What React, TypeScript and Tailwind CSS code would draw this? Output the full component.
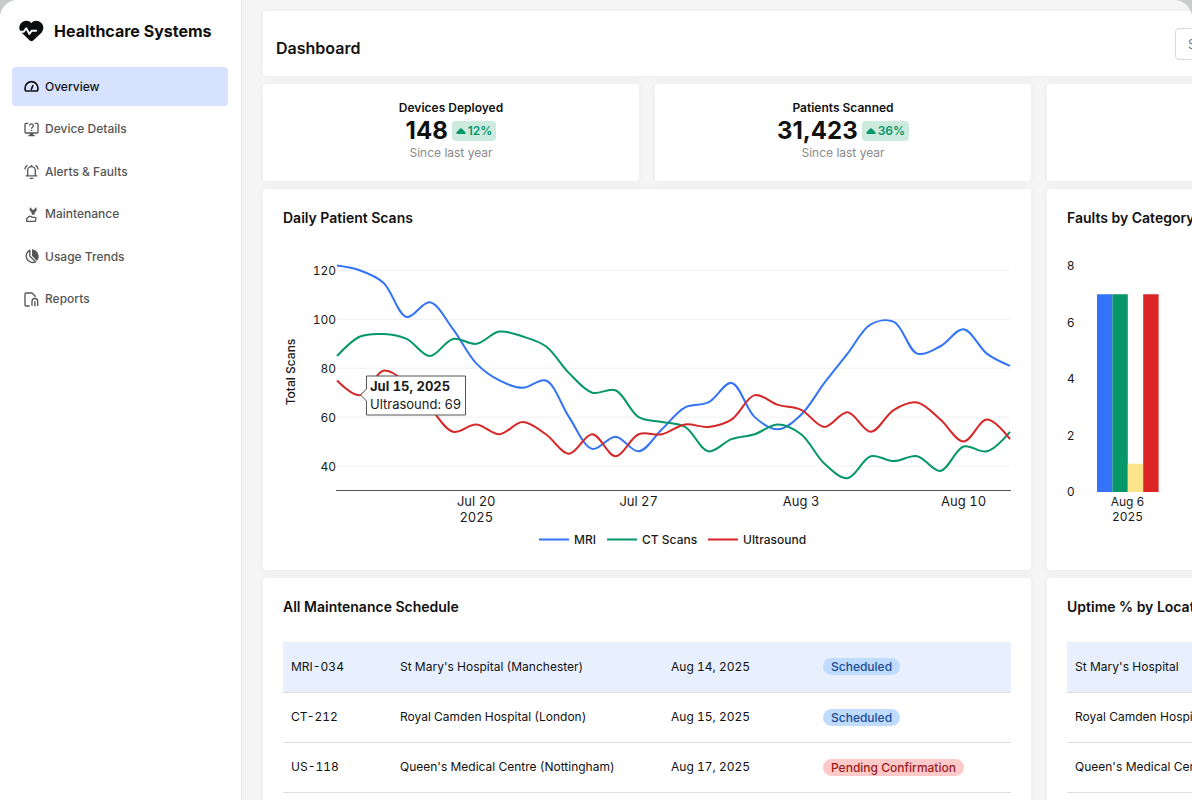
import type { ReactNode } from "react";

type Point = [number, number];

const navItems = [
  { label: "Overview", icon: <GaugeIcon />, active: true },
  { label: "Device Details", icon: <DeviceIcon /> },
  { label: "Alerts & Faults", icon: <BellIcon /> },
  { label: "Maintenance", icon: <WrenchHandIcon /> },
  { label: "Usage Trends", icon: <PieIcon /> },
  { label: "Reports", icon: <ReportIcon /> },
];

const stats = [
  { label: "Devices Deployed", value: "148", change: "12%" },
  { label: "Patients Scanned", value: "31,423", change: "36%" },
];

// One value per day, Jul 14 to Aug 12
const series = [
  {
    name: "MRI",
    color: "#3373f6",
    labelX: 292,
    values: [122, 120, 115, 101, 107, 96, 82, 75, 72, 75, 60, 47, 52, 46, 55, 64, 66, 74, 60, 55, 61, 74, 86, 98, 99, 86, 89, 96, 86, 81],
  },
  {
    name: "CT Scans",
    color: "#059669",
    labelX: 360,
    values: [85, 93, 94, 92, 85, 92, 90, 95, 93, 89, 78, 70, 71, 60, 58, 56, 46, 51, 53, 57, 53, 41, 35, 44, 42, 44, 38, 48, 46, 54],
  },
  {
    name: "Ultrasound",
    color: "#d62728",
    labelX: 461,
    values: [75, 69, 79, 74, 64, 54, 57, 53, 58, 53, 45, 53, 44, 53, 53, 57, 56, 59, 69, 65, 63, 56, 62, 54, 63, 66, 59, 50, 59, 51],
  },
];

const faults = [
  { value: 7, color: "#3373f9" },
  { value: 7, color: "#05966a" },
  { value: 1, color: "#fde38a" },
  { value: 7, color: "#dc2626" },
];

const schedule = [
  { id: "MRI-034", site: "St Mary's Hospital (Manchester)", date: "Aug 14, 2025", status: "Scheduled" },
  { id: "CT-212", site: "Royal Camden Hospital (London)", date: "Aug 15, 2025", status: "Scheduled" },
  { id: "US-118", site: "Queen's Medical Centre (Nottingham)", date: "Aug 17, 2025", status: "Pending Confirmation" },
];

const uptimeSites = ["St Mary's Hospital", "Royal Camden Hospital", "Queen's Medical Centre"];

const dayX = (day: number) => 55 + (day * 673) / 29;
const scanY = (value: number) => 39.5 + ((120 - value) * 195.5) / 80;

// Centripetal Catmull-Rom control points on both sides of a point
function tangent(prev: Point, cur: Point, next: Point): [Point, Point] {
  const d1 = [prev[0] - cur[0], prev[1] - cur[1]];
  const d2 = [next[0] - cur[0], next[1] - cur[1]];
  const a = Math.sqrt(Math.hypot(d1[0], d1[1]));
  const b = Math.sqrt(Math.hypot(d2[0], d2[1]));
  const nx = b * b * d1[0] - a * a * d2[0];
  const ny = b * b * d1[1] - a * a * d2[1];
  const before = 3 * b * (a + b);
  const after = 3 * a * (a + b);
  return [
    [cur[0] + nx / before, cur[1] + ny / before],
    [cur[0] - nx / after, cur[1] - ny / after],
  ];
}

function smoothPath(values: number[]) {
  const pts = values.map((v, i): Point => [dayX(i), scanY(v)]);
  const last = pts.length - 1;
  const tans = pts.slice(1, last).map((p, i) => tangent(pts[i], p, pts[i + 2]));
  let d = `M${pts[0]}Q${tans[0][0]} ${pts[1]}`;
  for (let i = 2; i < last; i++) {
    d += `C${tans[i - 2][1]} ${tans[i - 1][0]} ${pts[i]}`;
  }
  return d + `Q${tans[tans.length - 1][1]} ${pts[last]}`;
}

function NavIcon({ children }: { children: ReactNode }) {
  return (
    <svg
      viewBox="0 0 45 45"
      className="size-[15px] shrink-0"
      fill="none"
      stroke="currentColor"
      strokeWidth="4"
      strokeLinejoin="round"
      aria-hidden="true"
    >
      {children}
    </svg>
  );
}

function GaugeIcon() {
  return (
    <NavIcon>
      <path strokeWidth="5" d="M5 36C3.5 33 3 30.5 3 27.5a19.5 19.5 0 0 1 39 0c0 3-.5 5.5-2 8.5Z" />
      <path strokeWidth="5" strokeLinecap="round" d="M26.5 20 22 31" />
    </NavIcon>
  );
}

function DeviceIcon() {
  return (
    <NavIcon>
      <path d="M13 4H6a3 3 0 0 0-3 3v23a3 3 0 0 0 3 3h33a3 3 0 0 0 3-3V7a3 3 0 0 0-3-3h-7" />
      <path d="M17 11a5.5 5.5 0 1 1 8 5c-2 1-2.5 2-2.5 4" />
      <path d="M20 23h5v4h-5zM17 34h11v5h4v4H13v-4h4z" fill="currentColor" stroke="none" />
    </NavIcon>
  );
}

function BellIcon() {
  return (
    <NavIcon>
      <path d="M11 35V19.5a11.5 11.5 0 0 1 23 0V35M5 35.5h35M17 43h11" />
      <path d="M2.5 16C3 11 5.5 7 10 4M42.5 16C42 11 39.5 7 35 4M22.5 8V3" />
    </NavIcon>
  );
}

function WrenchHandIcon() {
  return (
    <NavIcon>
      <path
        d="M20 2c-3 3-3 8 0 11l4 4v5h7v-5l4-4c3-3 3-8 0-11l-3 6-4.500 2L23 8Z"
        fill="currentColor"
        stroke="currentColor"
        strokeWidth="2"
      />
      <path d="M8 43V35l8-7h5l3 3h9a3 3 0 0 1 3 3L33.5 43Z" />
    </NavIcon>
  );
}

function PieIcon() {
  return (
    <NavIcon>
      <path d="M17.5 3.5a19.5 19.5 0 1 0 17.5 35L17.5 22Z" />
      <path d="M24 1a21.5 21.5 0 0 1 15 35L24 20.5Z" fill="currentColor" stroke="none" />
    </NavIcon>
  );
}

function ReportIcon() {
  return (
    <NavIcon>
      <path d="M17 42H6a3 3 0 0 1-3-3V6a3 3 0 0 1 3-3h18l9 9v4" />
      <path d="M24 41V28a8.5 8.5 0 0 1 17 0v14M32.5 43V28" />
    </NavIcon>
  );
}

function Logo() {
  return (
    <svg viewBox="-3 -1 82 70" className="w-[26px] shrink-0" aria-hidden="true">
      <path
        fill="#0c0d0e"
        d="M39 9C47-1 62 0 70 8c9 9 9 22 1 31L45 64c-3.5 3-7.5 3-11 0L7 38C-1 29-1 17 8 8 16 0 31-1 39 9Z"
      />
      <path
        fill="none"
        stroke="#fff"
        strokeWidth="6"
        strokeLinecap="round"
        strokeLinejoin="round"
        d="M-3 36h18l8-11 10 18 7-10h14"
      />
    </svg>
  );
}

function Card({ className = "", children }: { className?: string; children?: ReactNode }) {
  return (
    <section className={`rounded bg-white shadow-[0_0_8px_rgba(0,0,0,0.05)] ${className}`}>
      {children}
    </section>
  );
}

function CardTitle({ children }: { children: ReactNode }) {
  return <h2 className="text-sm leading-[18px] font-semibold whitespace-nowrap">{children}</h2>;
}

function Sidebar() {
  return (
    <aside className="w-[242px] shrink-0 border-r border-[#e8e8e8] bg-white px-3">
      <div className="flex h-[62px] items-center gap-[10px] pl-[6px]">
        <Logo />
        <span className="text-base font-bold whitespace-nowrap">Healthcare Systems</span>
      </div>
      <nav className="mt-[5px] mr-px flex h-[252px] flex-col justify-between">
        {navItems.map((item) => (
          <a
            key={item.label}
            href="#"
            className={`flex h-[39px] items-center gap-[6px] rounded px-3 text-xs font-medium ${
              item.active ? "bg-[#d6e2ff] text-[#111]" : "text-[#555]"
            }`}
          >
            {item.icon}
            {item.label}
          </a>
        ))}
      </nav>
    </aside>
  );
}

function StatCard({ label, value, change }: { label: string; value: string; change: string }) {
  return (
    <Card className="flex flex-col items-center pt-4 pb-5">
      <h2 className="text-xs leading-4 font-semibold">{label}</h2>
      <div className="flex h-[29px] items-center gap-1">
        <span className="text-2xl leading-none font-bold">{value}</span>
        <span className="flex h-5 items-center gap-[2px] rounded bg-[#cdeade] px-1 text-xs font-semibold text-[#059669]">
          <svg viewBox="0 0 10 6" className="w-[10px]" fill="currentColor" aria-hidden="true">
            <path d="M4.2.5a1.2 1.2 0 0 1 1.6 0l3.400 3.500C10 5 9.500 6 8.500 6h-7C.5 6 0 5 .8 4Z" />
          </svg>
          {change}
        </span>
      </div>
      <p className="text-xs leading-4 text-[#8a8a8a]">Since last year</p>
    </Card>
  );
}

function ScansChart() {
  return (
    <svg
      viewBox="1 0 728 319"
      className="mt-1 w-full text-[13px] tabular-nums"
      fill="#1a1a1a"
      role="img"
      aria-label="Daily Patient Scans"
    >
      {[120, 100, 80, 60, 40].map((tick) => (
        <g key={tick}>
          <line x1="55" x2="728" y1={scanY(tick)} y2={scanY(tick)} stroke="#f1f1f1" />
          <text x="54" y={scanY(tick) + 4.5} textAnchor="end" className="text-xs">
            {tick}
          </text>
        </g>
      ))}
      <text transform="translate(13 141) rotate(-90)" textAnchor="middle" className="text-xs font-medium">
        Total Scans
      </text>
      {series.map((s) => (
        <path key={s.name} d={smoothPath(s.values)} fill="none" stroke={s.color} strokeWidth="2" />
      ))}
      <line x1="54" x2="729" y1="259.5" y2="259.5" stroke="#555" />
      <g textAnchor="middle">
        <text x={dayX(6)} y="275">Jul 20</text>
        <text x={dayX(6)} y="291">2025</text>
        <text x={dayX(13)} y="275">Jul 27</text>
        <text x={dayX(20)} y="275">Aug 3</text>
        <text x={dayX(27)} y="275">Aug 10</text>
      </g>

      {/* Legend */}
      {series.map((s) => (
        <g key={s.name}>
          <line x1={s.labelX - 35} x2={s.labelX - 5} y1="308.5" y2="308.5" stroke={s.color} strokeWidth="2" />
          <text x={s.labelX} y="313" className="text-xs font-medium">
            {s.name}
          </text>
        </g>
      ))}

      {/* Hover label */}
      <path d="M78.5 164 84.5 158V145H183.5V184H84.5V170Z" fill="#fff" stroke="#555" />
      <text x="88" y="160" className="font-bold">Jul 15, 2025</text>
      <text x="88" y="178">Ultrasound: 69</text>
    </svg>
  );
}

function FaultsChart() {
  return (
    <svg viewBox="0 0 336 319" className="mt-1 w-full text-xs" fill="#1a1a1a" role="img" aria-label="Faults by Category">
      {[8, 6, 4, 2, 0].map((tick) => (
        <text key={tick} x="0" y={39 + (8 - tick) * 28.25}>
          {tick}
        </text>
      ))}
      {faults.map((bar, i) => (
        <rect
          key={i}
          x={30 + i * 15.4}
          y={261 - bar.value * 28.25}
          width="15.4"
          height={bar.value * 28.25}
          fill={bar.color}
        />
      ))}
      <g textAnchor="middle" className="tabular-nums">
        <text x="60.5" y="275">Aug 6</text>
        <text x="60.5" y="290">2025</text>
      </g>
    </svg>
  );
}

function rowClass(index: number) {
  return `h-[50px] border-b border-[#dedede] ${index === 0 ? "bg-[#e8f0fe]" : ""}`;
}

export default function App() {
  return (
    <div className="h-screen overflow-hidden bg-[#c9cccb] font-['Inter',sans-serif] text-[#111]">
      <div className="flex h-full overflow-hidden rounded-t-[18px] bg-[#f5f5f5]">
        <Sidebar />

        <main className="min-w-0 flex-1 overflow-hidden pt-[11px] pl-[21px]">
          <div className="grid min-w-[1160px] grid-cols-3 gap-x-4 gap-y-2">
            <header className="col-span-3 flex h-[65px] items-center justify-between rounded bg-white pr-4 pl-[13px] shadow-[0_0_8px_rgba(0,0,0,0.05)]">
              <h1 className="pt-2 text-base font-semibold">Dashboard</h1>
              <input
                type="search"
                aria-label="Search"
                placeholder="Search"
                className="h-8 w-[232px] rounded border border-[#d9d9d9] bg-white px-3 text-[13px] placeholder:text-[#777]"
              />
            </header>

            {stats.map((stat) => (
              <StatCard key={stat.label} {...stat} />
            ))}
            <Card />

            <Card className="col-span-2 p-5">
              <CardTitle>Daily Patient Scans</CardTitle>
              <ScansChart />
            </Card>
            <Card className="p-5">
              <CardTitle>Faults by Category</CardTitle>
              <FaultsChart />
            </Card>

            <Card className="col-span-2 p-5">
              <CardTitle>All Maintenance Schedule</CardTitle>
              <table className="mt-[26px] w-full table-fixed text-left text-xs tabular-nums">
                <colgroup>
                  <col className="w-[109px]" />
                  <col className="w-[271px]" />
                  <col className="w-[152px]" />
                  <col />
                </colgroup>
                <tbody>
                  {schedule.map((row, i) => (
                    <tr key={row.id} className={rowClass(i)}>
                      <td className="pl-2">{row.id}</td>
                      <td className="pl-2">{row.site}</td>
                      <td className="pl-2">{row.date}</td>
                      <td className="pl-2">
                        <span
                          className={`inline-block rounded-full px-2 leading-[17px] font-medium ${
                            row.status === "Scheduled" ? "bg-[#bfdbfe] text-[#1a4b92]" : "bg-[#fec9c9] text-[#991b1b]"
                          }`}
                        >
                          {row.status}
                        </span>
                      </td>
                    </tr>
                  ))}
                </tbody>
              </table>
            </Card>
            <Card className="p-5">
              <CardTitle>Uptime % by Location</CardTitle>
              <table className="mt-[26px] w-full text-left text-xs">
                <tbody>
                  {uptimeSites.map((site, i) => (
                    <tr key={site} className={rowClass(i)}>
                      <td className="pl-2">{site}</td>
                    </tr>
                  ))}
                </tbody>
              </table>
            </Card>
          </div>
        </main>
      </div>
    </div>
  );
}
